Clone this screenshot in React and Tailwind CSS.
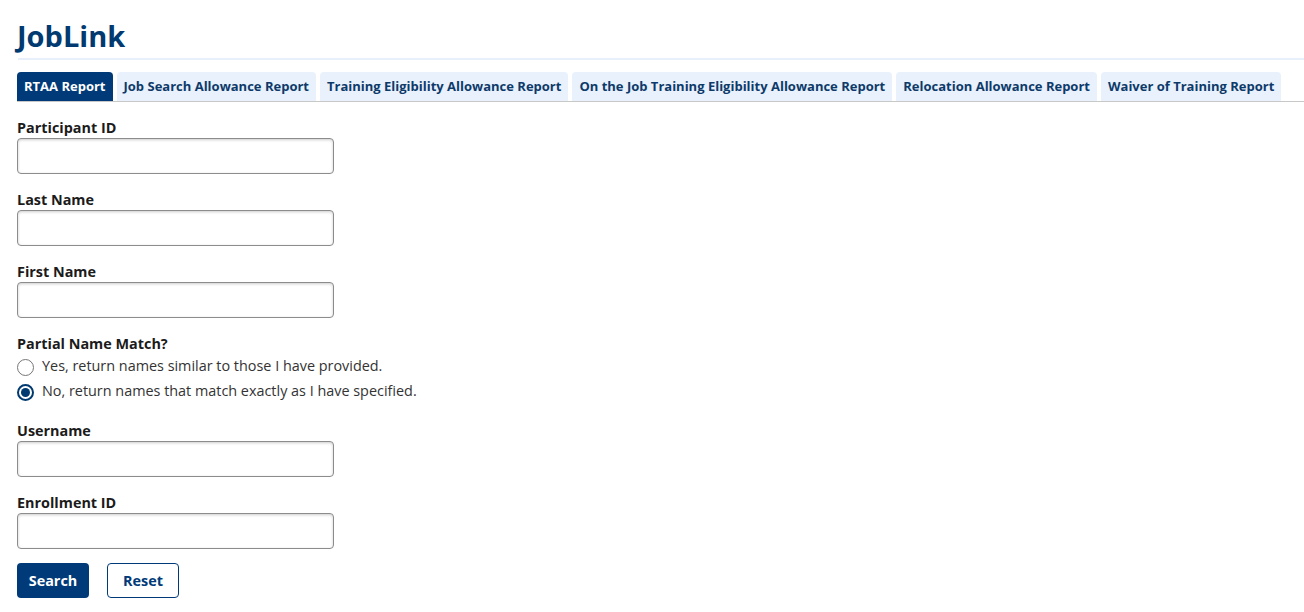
import React from "react";

const tabs = [
  "RTAA Report",
  "Job Search Allowance Report",
  "Training Eligibility Allowance Report",
  "On the Job Training Eligibility Allowance Report",
  "Relocation Allowance Report",
  "Waiver of Training Report",
];

function Field({ label }) {
  return (
    <div className="flex flex-col">
      <label className="text-[14.4px] font-bold leading-[20px] text-[#1b1b1b]">{label}</label>
      <input
        type="text"
        className="h-[36px] w-[317px] rounded-[4px] border border-[#8c8c8c] bg-white shadow-[inset_0_1px_3px_rgba(0,0,0,0.2)] outline-none"
      />
    </div>
  );
}

function Radio({ checked, label }) {
  return (
    <label className="flex items-center gap-[8px] h-[25px] text-[14.4px] text-[#333]">
      <span
        className={
          "mt-[2px] flex h-[17px] w-[17px] items-center justify-center rounded-full border bg-white " +
          (checked ? "border-[#003a70] border-2" : "border-[#767676]")
        }
      >
        {checked && <span className="h-[9px] w-[9px] rounded-full bg-[#003a70]" />}
      </span>
      <span className="-mt-[2px]">{label}</span>
    </label>
  );
}

export default function App() {
  return (
    <div className="min-h-[612px] bg-white pl-[17px]" style={{ fontFamily: '"Open Sans", "Liberation Sans", sans-serif' }}>
      <h1 className="pt-[16px] text-[29px] font-bold leading-[40px] text-[#003a70]">JobLink</h1>
      <div className="mt-[2px] ml-[1px] h-[2px] bg-[#e7f0fa]" />
      <div className="mt-[12px] flex gap-[4px] border-b border-[#c8c8c8]">
        {tabs.map((t, i) => (
          <div
            key={t}
            className={
              "flex h-[29px] items-center rounded-t-[4px] px-[7px] text-[13px] font-bold " +
              (i === 0 ? "bg-[#003a78] text-white" : "bg-[#e8f1fc] text-[#0e3a6a]")
            }
          >
            {t}
          </div>
        ))}
      </div>
      <div className="mt-[16px] flex flex-col gap-[16px]">
        <Field label="Participant ID" />
        <Field label="Last Name" />
        <Field label="First Name" />
        <div className="flex flex-col pb-[1px]">
          <div className="text-[14.4px] font-bold leading-[20px] text-[#1b1b1b]">Partial Name Match?</div>
          <Radio checked={false} label="Yes, return names similar to those I have provided." />
          <Radio checked={true} label="No, return names that match exactly as I have specified." />
        </div>
        <Field label="Username" />
        <Field label="Enrollment ID" />
        <div className="-mt-[2px] flex gap-[18px]">
          <button className="h-[35px] w-[72px] rounded-[4px] bg-[#003a78] text-[14.4px] font-bold text-white">Search</button>
          <button className="h-[35px] w-[72px] rounded-[4px] border border-[#003a78] bg-white text-[14.4px] font-bold text-[#003a78]">Reset</button>
        </div>
      </div>
    </div>
  );
}
